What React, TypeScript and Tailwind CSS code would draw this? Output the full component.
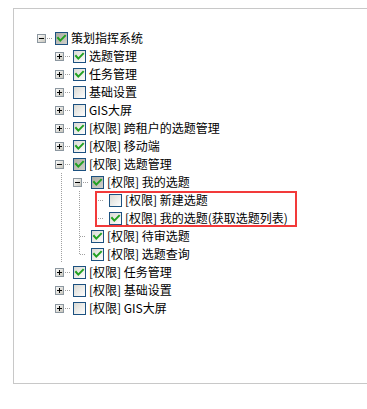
type Check = 'none' | 'checked' | 'partial'
type Elbow = 'plus' | 'minus' | 'tee' | 'end' | 'dash'

type Row = {
  depth: number
  elbow: Elbow
  check: Check
  label: string
  lines?: boolean[]
}

const rows: Row[] = [
  { depth: 0, elbow: 'minus', check: 'partial', label: '策划指挥系统' },
  { depth: 1, elbow: 'plus', check: 'checked', label: '选题管理' },
  { depth: 1, elbow: 'plus', check: 'checked', label: '任务管理' },
  { depth: 1, elbow: 'plus', check: 'none', label: '基础设置' },
  { depth: 1, elbow: 'plus', check: 'none', label: 'GIS大屏' },
  { depth: 1, elbow: 'plus', check: 'checked', label: '[权限] 跨租户的选题管理' },
  { depth: 1, elbow: 'plus', check: 'checked', label: '[权限] 移动端' },
  { depth: 1, elbow: 'minus', check: 'partial', label: '[权限] 选题管理' },
  { depth: 2, elbow: 'minus', check: 'partial', label: '[权限] 我的选题', lines: [false, true] },
  { depth: 3, elbow: 'dash', check: 'none', label: '[权限] 新建选题', lines: [false, true, true] },
  { depth: 3, elbow: 'dash', check: 'checked', label: '[权限] 我的选题(获取选题列表)', lines: [false, true, true] },
  { depth: 2, elbow: 'tee', check: 'checked', label: '[权限] 待审选题', lines: [false, true] },
  { depth: 2, elbow: 'end', check: 'checked', label: '[权限] 选题查询', lines: [false, true] },
  { depth: 1, elbow: 'plus', check: 'checked', label: '[权限] 任务管理' },
  { depth: 1, elbow: 'plus', check: 'none', label: '[权限] 基础设置' },
  { depth: 1, elbow: 'plus', check: 'none', label: '[权限] GIS大屏' },
]

const dot = { stroke: '#a0a0a0', strokeWidth: 1, strokeDasharray: '1 1' }

function IndentCell({ line }: { line: boolean }) {
  return (
    <svg width="18" height="18" className="shrink-0">
      {line && <line x1="11.5" y1="0" x2="11.5" y2="18" {...dot} />}
    </svg>
  )
}

function ElbowCell({ type }: { type: Elbow }) {
  if (type === 'tee' || type === 'end' || type === 'dash') {
    return (
      <svg width="23" height="18" className="shrink-0">
        {type !== 'dash' && (
          <line x1="11.5" y1="0" x2="11.5" y2={type === 'tee' ? 18 : 10} {...dot} />
        )}
        <line x1="12" y1="9.5" x2="18" y2="9.5" {...dot} />
      </svg>
    )
  }
  return (
    <svg width="23" height="18" className="shrink-0">
      <defs>
        <linearGradient id="exp" x1="0" y1="0" x2="1" y2="1">
          <stop offset="0" stopColor="#ffffff" />
          <stop offset="1" stopColor="#c4c2b8" />
        </linearGradient>
      </defs>
      <rect x="5.5" y="5.5" width="8" height="8" fill="url(#exp)" stroke="#8c97a0" />
      <line x1="7" y1="9.5" x2="12" y2="9.5" stroke="#000" />
      {type === 'plus' && <line x1="9.5" y1="7" x2="9.5" y2="12" stroke="#000" />}
      <line x1="15" y1="9.5" x2="21" y2="9.5" {...dot} />
    </svg>
  )
}

function CheckBox({ state }: { state: Check }) {
  const partial = state === 'partial'
  return (
    <svg width="13" height="13" className="shrink-0">
      <defs>
        <linearGradient id="cbLight" x1="0" y1="0" x2="1" y2="1">
          <stop offset="0" stopColor="#d8d8d2" />
          <stop offset="1" stopColor="#ffffff" />
        </linearGradient>
        <linearGradient id="cbGray" x1="0" y1="0" x2="1" y2="1">
          <stop offset="0" stopColor="#a9a9a2" />
          <stop offset="1" stopColor="#d2d2cc" />
        </linearGradient>
      </defs>
      <rect
        x="0.5"
        y="0.5"
        width="12"
        height="12"
        fill={partial ? 'url(#cbGray)' : 'url(#cbLight)'}
        stroke="#1c5180"
      />
      {state !== 'none' && (
        <polyline
          points="3,6 5.3,8.6 10,3.8"
          fill="none"
          stroke="#21a121"
          strokeWidth="2"
          strokeLinecap="square"
        />
      )}
    </svg>
  )
}

function TreeRow({ row }: { row: Row }) {
  const indents = Array.from({ length: row.depth }, (_, i) => row.lines?.[i] ?? false)
  return (
    <div className="flex h-[18px] items-center">
      {indents.map((l, i) => (
        <IndentCell key={i} line={l} />
      ))}
      <ElbowCell type={row.elbow} />
      <CheckBox state={row.check} />
      <span className="ml-[3px] whitespace-nowrap text-[12px] leading-[18px] text-black">
        {row.label}
      </span>
    </div>
  )
}

export default function App() {
  return (
    <div
      className="h-[409px] w-[367px] overflow-hidden bg-white"
      style={{ fontFamily: '"Noto Sans CJK SC", "Noto Sans", sans-serif' }}
    >
      <div className="ml-[13px] mt-[8px] h-[376px] w-[380px] border border-[#c8c8c8] pl-[18px] pt-[20px]">
        <div className="relative">
          {rows.map((r, i) => (
            <TreeRow key={i} row={r} />
          ))}
          <div className="absolute left-[63px] top-[162px] h-[36px] w-[202px] border-2 border-[#f23a3a]" />
        </div>
      </div>
    </div>
  )
}
